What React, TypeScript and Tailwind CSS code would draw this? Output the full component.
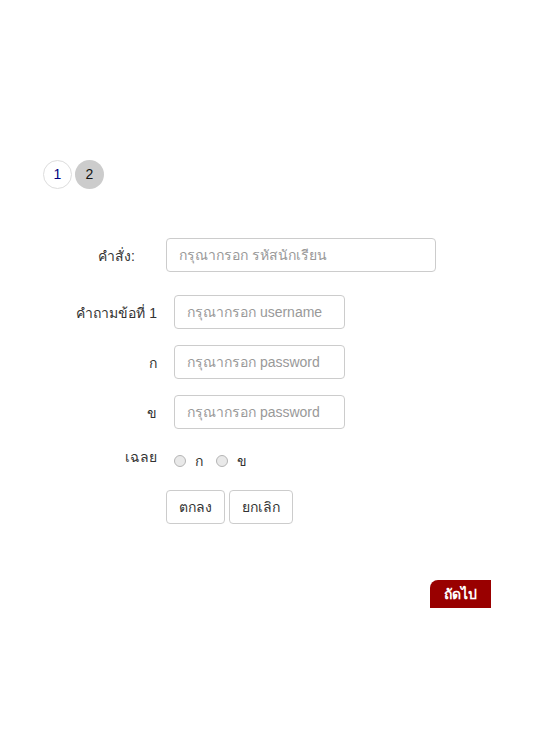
import React from 'react';

const labelCls = "text-right text-[14px] text-[#333] pt-[8px] leading-[20px]";
const inputCls = "h-[34px] border border-[#ccc] rounded-[4px] px-[12px] text-[14px] text-[#555] placeholder:text-[#999] outline-none bg-white";

const Radio: React.FC<{ label: string }> = ({ label }) => (
    <label className="flex items-center gap-[9px]">
        <span className="w-[12px] h-[12px] rounded-full border border-[#b5b5b5] bg-[#e9e9e9]" />
        <span className="text-[14px] text-[#333]">{label}</span>
    </label>
);

export default function App() {
    return (
        <div className="min-h-[755px] bg-white" style={{ fontFamily: '"Liberation Sans", "DejaVu Sans", sans-serif' }}>
            <div className="pt-[160px] pl-[43px] flex gap-[3px]">
                <div className="w-[29px] h-[29px] rounded-full border border-[#ddd] flex items-center justify-center text-[14px] text-[#000080]">1</div>
                <div className="w-[29px] h-[29px] rounded-full bg-[#cccccc] flex items-center justify-center text-[14px] text-[#111]">2</div>
            </div>

            <form className="mt-[49px] flex flex-col">
                <div className="flex">
                    <div className={`w-[135px] ${labelCls}`}>คำสั่ง:</div>
                    <input className={`ml-[31px] w-[270px] ${inputCls}`} placeholder="กรุณากรอก รหัสนักเรียน" />
                </div>

                <div className="flex mt-[23px]">
                    <div className={`w-[157px] ${labelCls}`}>คำถามข้อที่ 1</div>
                    <input className={`ml-[17px] w-[171px] ${inputCls}`} placeholder="กรุณากรอก username" />
                </div>

                <div className="flex mt-[16px]">
                    <div className={`w-[157px] ${labelCls}`}>ก</div>
                    <input type="password" className={`ml-[17px] w-[171px] ${inputCls}`} placeholder="กรุณากรอก password" />
                </div>

                <div className="flex mt-[16px]">
                    <div className={`w-[157px] ${labelCls}`}>ข</div>
                    <input type="password" className={`ml-[17px] w-[171px] ${inputCls}`} placeholder="กรุณากรอก password" />
                </div>

                <div className="flex mt-[18px]">
                    <div className="w-[157px] text-right text-[14px] text-[#333] leading-[20px]">เฉลย</div>
                    <div className="ml-[17px] flex items-center gap-[13px] h-[28px]">
                        <Radio label="ก" />
                        <Radio label="ข" />
                    </div>
                </div>

                <div className="flex gap-[4px] ml-[166px] mt-[15px]">
                    <button type="button" className="h-[34px] px-[12px] border border-[#ccc] rounded-[4px] bg-white text-[14px] text-[#333]">ตกลง</button>
                    <button type="button" className="h-[34px] px-[12px] border border-[#ccc] rounded-[4px] bg-white text-[14px] text-[#333]">ยกเลิก</button>
                </div>
            </form>

            <div className="flex justify-end pr-[67px] mt-[56px]">
                <button type="button" className="h-[28px] w-[61px] bg-[#990000] text-white font-bold text-[14px] rounded-tl-[8px]">ถัดไป</button>
            </div>
        </div>
    );
}
